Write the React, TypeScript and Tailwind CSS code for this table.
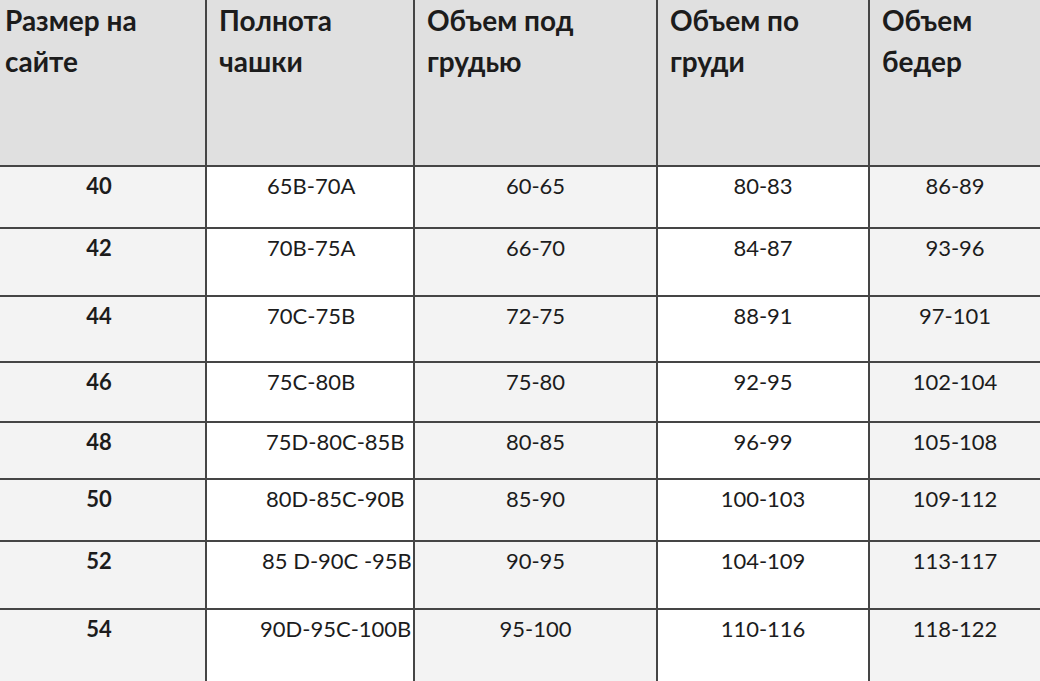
const headers = [
  ["Размер на", "сайте"],
  ["Полнота", "чашки"],
  ["Объем под", "грудью"],
  ["Объем по", "груди"],
  ["Объем", "бедер"],
]

type Row = {
  size: string
  cup: string
  cupPad: string
  under: string
  bust: string
  hips: string
  h: string
}

const rows: Row[] = [
  { size: "40", cup: "65B-70A", cupPad: "pl-[60px]", under: "60-65", bust: "80-83", hips: "86-89", h: "h-[62px]" },
  { size: "42", cup: "70B-75A", cupPad: "pl-[60px]", under: "66-70", bust: "84-87", hips: "93-96", h: "h-[68px]" },
  { size: "44", cup: "70C-75B", cupPad: "pl-[60px]", under: "72-75", bust: "88-91", hips: "97-101", h: "h-[66px]" },
  { size: "46", cup: "75C-80B", cupPad: "pl-[60px]", under: "75-80", bust: "92-95", hips: "102-104", h: "h-[60px]" },
  { size: "48", cup: "75D-80C-85B", cupPad: "pl-[59px]", under: "80-85", bust: "96-99", hips: "105-108", h: "h-[57px]" },
  { size: "50", cup: "80D-85C-90B", cupPad: "pl-[59px]", under: "85-90", bust: "100-103", hips: "109-112", h: "h-[62px]" },
  { size: "52", cup: "85 D-90C -95B", cupPad: "pl-[55px]", under: "90-95", bust: "104-109", hips: "113-117", h: "h-[68px]" },
  { size: "54", cup: "90D-95C-100B", cupPad: "pl-[53px]", under: "95-100", bust: "110-116", hips: "118-122", h: "h-[71px]" },
]

const cols = "grid grid-cols-[207px_208px_243px_212px_1fr]"

export default function App() {
  return (
    <div
      className="w-[1040px] h-[681px] overflow-hidden bg-white text-[#1c1c1c]"
      style={{ fontFamily: "Lato, 'Noto Sans', sans-serif" }}
    >
      {/* Header */}
      <div className={`${cols} h-[167px] bg-[#e0e0e0] border-b-2 border-[#454545]`}>
        {headers.map((h, i) => (
          <div
            key={i}
            className={`${i === 0 ? "pl-[5px]" : "pl-[12px]"} ${i < 4 ? "border-r-2 border-[#454545]" : ""} text-[28px] font-bold leading-[41px]`}
          >
            <div>{h[0]}</div>
            <div>{h[1]}</div>
          </div>
        ))}
      </div>

      {/* Rows */}
      {rows.map((r, idx) => (
        <div
          key={r.size}
          className={`${cols} ${r.h} ${idx < rows.length - 1 ? "border-b-2 border-[#454545]" : ""} text-[22px] leading-[26px]`}
        >
          <div className="bg-[#f3f3f3] border-r-2 border-[#454545] pt-[6px] text-center pr-[7px] font-bold">
            {r.size}
          </div>
          <div className={`bg-white border-r-2 border-[#454545] pt-[6px] ${r.cupPad} whitespace-nowrap`}>
            {r.cup}
          </div>
          <div className="bg-[#f3f3f3] border-r-2 border-[#454545] pt-[6px] text-center">{r.under}</div>
          <div className="bg-white border-r-2 border-[#454545] pt-[6px] text-center">{r.bust}</div>
          <div className="bg-[#f3f3f3] pt-[6px] text-center">{r.hips}</div>
        </div>
      ))}
    </div>
  )
}
